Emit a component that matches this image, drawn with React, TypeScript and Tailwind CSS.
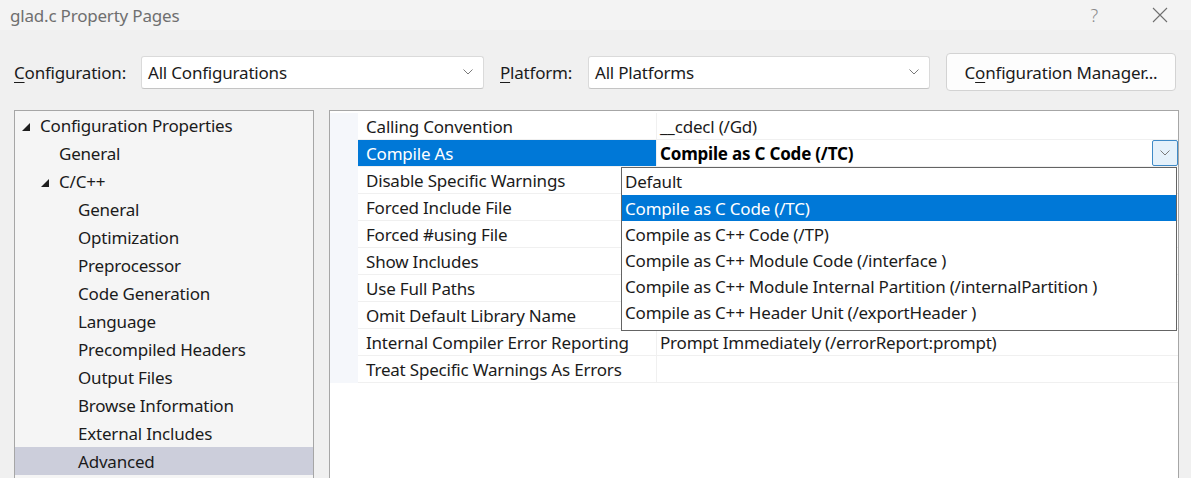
import React from "react";

const tree: { label: string; indent: number; expander?: boolean; selected?: boolean }[] = [
  { label: "Configuration Properties", indent: 0, expander: true },
  { label: "General", indent: 1 },
  { label: "C/C++", indent: 1, expander: true },
  { label: "General", indent: 2 },
  { label: "Optimization", indent: 2 },
  { label: "Preprocessor", indent: 2 },
  { label: "Code Generation", indent: 2 },
  { label: "Language", indent: 2 },
  { label: "Precompiled Headers", indent: 2 },
  { label: "Output Files", indent: 2 },
  { label: "Browse Information", indent: 2 },
  { label: "External Includes", indent: 2 },
  { label: "Advanced", indent: 2, selected: true },
];

const props: [string, string][] = [
  ["Calling Convention", "__cdecl (/Gd)"],
  ["Compile As", "Compile as C Code (/TC)"],
  ["Disable Specific Warnings", ""],
  ["Forced Include File", ""],
  ["Forced #using File", ""],
  ["Show Includes", ""],
  ["Use Full Paths", ""],
  ["Omit Default Library Name", ""],
  ["Internal Compiler Error Reporting", "Prompt Immediately (/errorReport:prompt)"],
  ["Treat Specific Warnings As Errors", ""],
];

const options = [
  "Default",
  "Compile as C Code (/TC)",
  "Compile as C++ Code (/TP)",
  "Compile as C++ Module Code (/interface )",
  "Compile as C++ Module Internal Partition (/internalPartition )",
  "Compile as C++ Header Unit (/exportHeader )",
];

function Chevron({ className = "" }: { className?: string }) {
  return (
    <svg width="10" height="6" viewBox="0 0 10 6" className={className}>
      <path d="M0.5 0.5 L5 5 L9.5 0.5" fill="none" stroke="#7a7a7a" strokeWidth="1" />
    </svg>
  );
}

function Expander() {
  return (
    <svg width="8" height="8" viewBox="0 0 8 8" className="mt-[3px]">
      <polygon points="8,0 8,8 0,8" fill="#1e1e1e" />
    </svg>
  );
}

function Combo({ value, width }: { value: string; width: string }) {
  return (
    <div className={`${width} h-[33px] flex items-center justify-between bg-white border border-[#dadada] border-b-[#c4c4c4] rounded-[3px] pl-[6px] pr-[10px]`}>
      <span>{value}</span>
      <Chevron />
    </div>
  );
}

export default function App() {
  return (
    <div className="relative w-[1191px] h-[478px] overflow-hidden bg-[#f0f0f0] text-[17px] tracking-[-0.2px] text-[#1b1b1b] font-['Noto_Sans',sans-serif] leading-none">
      {/* title bar */}
      <div className="h-[30px] flex items-center justify-between pl-[10px] bg-[#f3f3f3]">
        <span className="text-[#6f6f6f]">glad.c Property Pages</span>
        <div className="flex items-center h-full">
          <span className="text-[#8a8a8a] text-[18px] font-light mr-[54px]">?</span>
          <svg width="16" height="16" viewBox="0 0 16 16" className="mr-[23px]">
            <path d="M1 1 L15 15 M15 1 L1 15" stroke="#6f6f6f" strokeWidth="1.1" />
          </svg>
        </div>
      </div>

      {/* configuration row */}
      <div className="mt-[23px] h-[38px] flex items-center pl-[14px]">
        <span className="w-[127px]">
          <span className="underline underline-offset-[3px]">C</span>onfiguration:
        </span>
        <Combo value="All Configurations" width="w-[343px]" />
        <span className="ml-[16px] w-[88px]">
          <span className="underline underline-offset-[3px]">P</span>latform:
        </span>
        <Combo value="All Platforms" width="w-[342px]" />
        <button className="ml-[16px] w-[230px] h-[38px] bg-[#fdfdfd] border border-[#d3d3d3] rounded-[4px] flex items-center justify-center">
          C<span className="underline underline-offset-[3px]">o</span>nfiguration Manager...
        </button>
      </div>

      {/* main */}
      <div className="mt-[19px] flex pl-[14px]">
        <div className="w-[300px] h-[380px] bg-[#f5f5f5] border border-[#a6a6a6]">
          {tree.map((t, i) => (
            <div
              key={i}
              className={`h-[28px] flex items-center ${t.selected ? "bg-[#cccedb]" : ""}`}
              style={{ paddingLeft: 7 + t.indent * 19 }}
            >
              <span className="w-[17px] flex">{t.expander && <Expander />}</span>
              <span className="ml-[1px]">{t.label}</span>
            </div>
          ))}
        </div>

        <div className="ml-[15px] w-[850px] h-[380px] bg-white border border-[#a6a6a6] pt-[2px]">
          <div className="flex">
            <div className="w-[28px] bg-[#f5f7fb]" />
            <div className="flex-1">
              {props.map(([name, value], i) => (
                <div key={i} className="h-[27px] flex border-b border-[#f0f0f0]">
                  <div className={`w-[299px] flex items-center pl-[8px] border-r border-[#f0f0f0] ${i === 1 ? "bg-[#0078d7] text-white" : ""}`}>
                    {name}
                  </div>
                  <div className={`relative flex-1 flex items-center pl-[3px] ${i === 1 ? "font-bold text-black" : ""}`}>
                    {value}
                    {i === 1 && (
                      <div className="absolute right-0 top-0 w-[26px] h-[26px] bg-[#e5f1fb] border border-[#3f8ac7] rounded-[2px] flex items-center justify-center">
                        <Chevron />
                      </div>
                    )}
                  </div>
                </div>
              ))}
            </div>
          </div>
        </div>
      </div>

      {/* dropdown list */}
      <div className="absolute left-[621px] top-[167px] w-[556px] h-[164px] bg-white border border-[#646464]">
        {options.map((o, i) => (
          <div
            key={i}
            className={`${i === 0 ? "h-[27px]" : "h-[26px]"} flex items-center pl-[3px] ${i === 1 ? "bg-[#0078d7] text-white" : ""}`}
          >
            {o}
          </div>
        ))}
      </div>
    </div>
  );
}
